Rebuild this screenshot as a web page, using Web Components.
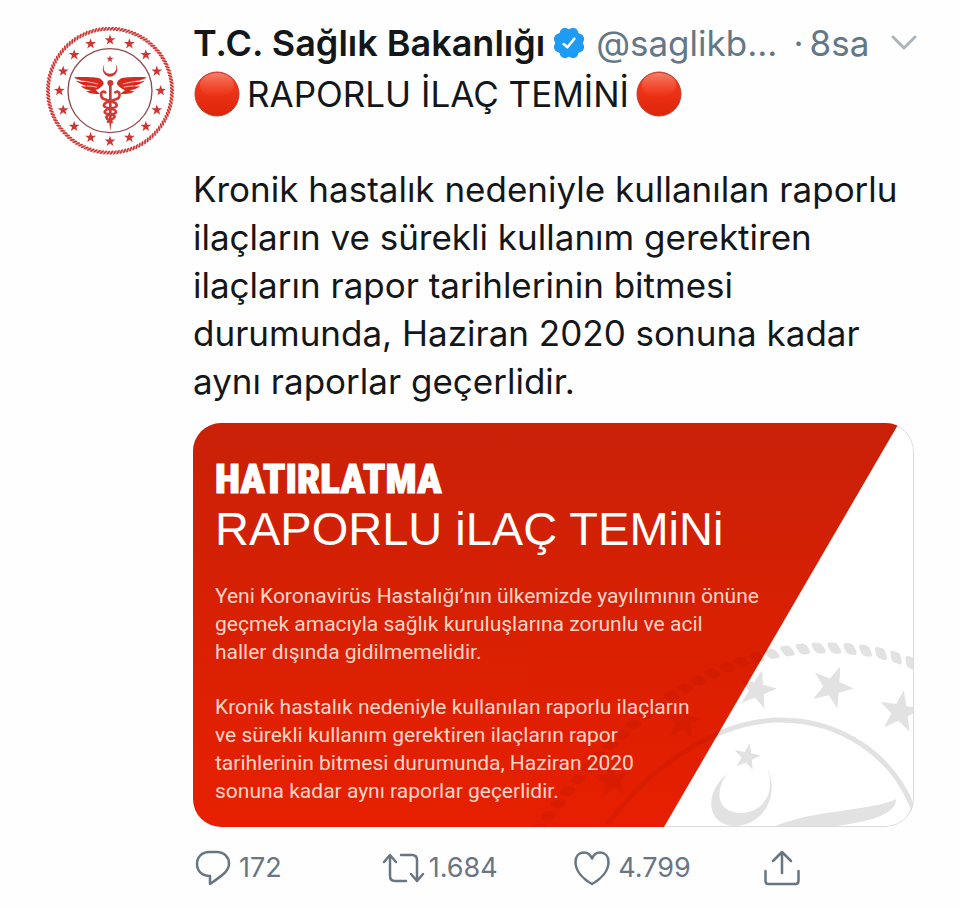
<!DOCTYPE html>
<html lang="tr">
<head>
<meta charset="utf-8">
<meta name="viewport" content="width=device-width, initial-scale=1">
<title>T.C. Sağlık Bakanlığı</title>
<style>
  body { margin: 0; background: #fefefe; color: #14171a; font-family: Inter, "Liberation Sans", sans-serif; }
</style>
</head>
<body>
<tweet-post>
  <ministry-seal slot="avatar"></ministry-seal>
  <tweet-header slot="header" name="T.C. Sağlık Bakanlığı" handle="@saglikb..." time="8sa"></tweet-header>
  <tweet-body slot="body">
    <span slot="title"><red-dot></red-dot>RAPORLU İLAÇ TEMİNİ<red-dot></red-dot></span>
    Kronik hastalık nedeniyle kullanılan raporlu ilaçların ve sürekli kullanım gerektiren ilaçların rapor tarihlerinin bitmesi durumunda, Haziran 2020 sonuna kadar aynı raporlar geçerlidir.
  </tweet-body>
  <notice-card slot="media">
    <span slot="kicker">HATIRLATMA</span>
    <span slot="title">RAPORLU iLAÇ TEMiNi</span>
    <p>Yeni Koronavirüs Hastalığı’nın ülkemizde yayılımının önüne<br>geçmek amacıyla sağlık kuruluşlarına zorunlu ve acil<br>haller dışında gidilmemelidir.</p>
    <p>Kronik hastalık nedeniyle kullanılan raporlu ilaçların<br>ve sürekli kullanım gerektiren ilaçların rapor<br>tarihlerinin bitmesi durumunda, Haziran 2020<br>sonuna kadar aynı raporlar geçerlidir.</p>
  </notice-card>
  <tweet-action slot="actions" kind="reply" label="Yanıtla">172</tweet-action>
  <tweet-action slot="actions" kind="retweet" label="Retweetle">1.684</tweet-action>
  <tweet-action slot="actions" kind="like" label="Beğen">4.799</tweet-action>
  <tweet-action slot="actions" kind="share" label="Paylaş"></tweet-action>
</tweet-post>

<script>
  const SVG = 'http://www.w3.org/2000/svg';

  // Points of a five-pointed star around a centre.
  function star(cx, cy, r, turn = 0) {
    const pts = [];
    for (let i = 0; i < 10; i++) {
      const a = (turn - 90 + i * 36) * Math.PI / 180;
      const d = i % 2 ? r * 0.4 : r;
      pts.push((cx + d * Math.cos(a)).toFixed(2) + ',' + (cy + d * Math.sin(a)).toFixed(2));
    }
    return `<polygon points="${pts.join(' ')}"/>`;
  }

  // Slanted strands laid along a path, forming a rope.
  function rope(d, count, w, h, slant) {
    const p = document.createElementNS(SVG, 'path');
    p.setAttribute('d', d);
    const len = p.getTotalLength();
    let out = '';
    for (let i = 0; i < count; i++) {
      const s = (i + 0.5) * len / count;
      const a = p.getPointAtLength(s), b = p.getPointAtLength(Math.min(len, s + 1)), c = p.getPointAtLength(Math.max(0, s - 1));
      const deg = Math.atan2(b.y - c.y, b.x - c.x) * 180 / Math.PI;
      out += `<rect x="${-w / 2}" y="${-h / 2}" width="${w}" height="${h}" rx="${w / 3}" transform="translate(${a.x.toFixed(2)} ${a.y.toFixed(2)}) rotate(${deg.toFixed(2)}) skewX(${slant})"/>`;
    }
    return out;
  }

  class BaseElement extends HTMLElement {
    constructor() {
      super();
      this.attachShadow({ mode: 'open' });
    }
    connectedCallback() {
      this.shadowRoot.innerHTML = this.render();
    }
  }

  customElements.define('tweet-post', class extends BaseElement {
    render() {
      return `<style>
        :host { display: block; padding: 19px 46px 16px; }
        article { display: grid; grid-template-columns: 128px minmax(0, 1fr); column-gap: 19px; }
        .avatar { padding-top: 8px; }
        footer { display: grid; grid-template-columns: repeat(3, 1fr) 152px; margin-top: 17px; }
      </style>
      <article>
        <div class="avatar"><slot name="avatar"></slot></div>
        <div>
          <slot name="header"></slot>
          <slot name="body"></slot>
          <slot name="media"></slot>
          <footer><slot name="actions"></slot></footer>
        </div>
      </article>`;
    }
  });

  customElements.define('ministry-seal', class extends BaseElement {
    render() {
      let stars = '';
      for (let i = 0; i < 16; i++) {
        const a = i * 22.5 * Math.PI / 180;
        stars += star(210 + 152 * Math.sin(a), 211 - 152 * Math.cos(a), 17);
      }
      const wing = `<path d="M102 171C120 169 168 170 178 174C188 179 193 187 190 193C183 200 176 207 167 209C173 214 177 218 180 220C165 222 146 220 138 211C142 212 149 212 153 210C139 208 127 203 122 197C129 199 137 199 142 197C125 193 112 186 108 181C121 184 132 186 142 185C124 181 107 177 102 171Z"/>
        <path d="M128 182C145 184 161 188 174 191M141 197C153 197 163 199 171 201" fill="none" stroke="#fff" stroke-width="2"/>`;
      return `<style>:host { display: block; } svg { display: block; width: 100%; }</style>
      <svg viewBox="18 20 384 384" role="img" aria-label="T.C. Sağlık Bakanlığı">
        <circle cx="210" cy="211" r="190" fill="#fff"/>
        <g fill="#cf3633">
          <circle cx="210" cy="211" r="186" fill="none" stroke="#e9a3a0" stroke-width="7"/>
          ${rope('M210 25A186 186 0 1 1 209.9 25Z', 120, 6, 12, -35)}
          <circle cx="210" cy="211" r="126" fill="none" stroke="#8f4a4c" stroke-width="4"/>
          ${stars}
          ${star(210, 116, 11)}
          <path d="M194 131C183 143 188 168 210 169C232 168 238 143 226 131C234 147 225 160 210 160C195 160 186 147 194 131Z"/>
          <g fill="#d8291f">${wing}<g transform="translate(422 0) scale(-1 1)">${wing}</g></g>
          <circle cx="211" cy="188" r="9"/>
          <path d="M207 190H215V300L211 332L207 300Z"/>
          <g fill="none" stroke="#d33a36" stroke-width="8" stroke-linecap="round">
            <path d="M196 216C181 207 178 232 194 237C212 243 233 246 230 257C225 267 194 262 194 275C194 285 225 279 224 290C222 297 208 298 204 304"/>
            <path d="M226 216C241 207 244 232 228 237C210 243 189 246 192 257C197 267 228 262 228 275C228 285 198 280 199 291C201 299 214 300 215 305"/>
          </g>
        </g>
      </svg>`;
    }
  });

  customElements.define('tweet-header', class extends BaseElement {
    render() {
      let lobes = '';
      for (let i = 0; i < 8; i++) {
        const a = (i * 45 + 22.5) * Math.PI / 180;
        lobes += `<circle cx="${(16 + 10 * Math.cos(a)).toFixed(2)}" cy="${(16 + 10 * Math.sin(a)).toFixed(2)}" r="5"/>`;
      }
      return `<style>
        :host { display: flex; align-items: center; height: 48px; margin-bottom: 3px; font-size: 35px; line-height: 48px; white-space: nowrap; color: #647786; }
        h1 { margin: 0; font: inherit; font-size: 36px; font-weight: 600; color: #14171a; }
        .badge { flex: none; width: 34px; height: 34px; margin: 0 10px 0 7px; }
        a { color: inherit; text-decoration: none; }
        .dot { margin-left: 16px; margin-right: 6px; }
        button { margin: 0 -4px 0 auto; padding: 0; border: 0; background: none; display: flex; }
      </style>
      <h1>${this.getAttribute('name')}</h1>
      <svg class="badge" viewBox="0 0 32 32" role="img" aria-label="Onaylanmış hesap">
        <g fill="#1d9bf5">${lobes}<circle cx="16" cy="16" r="13"/></g>
        <path d="M11 17L14.500 20L21 12" fill="none" stroke="#fff" stroke-width="2.500" stroke-linecap="round" stroke-linejoin="round"/>
      </svg>
      <a href="#profile">${this.getAttribute('handle')}</a>
      <span class="dot">·</span><time>${this.getAttribute('time')}</time>
      <button type="button" aria-label="Diğer">
        <svg width="28" height="16" viewBox="0 0 28 16"><path d="M3 2L14 13L25 2" fill="none" stroke="#a9b4bd" stroke-width="3" stroke-linecap="round"/></svg>
      </button>`;
    }
  });

  customElements.define('red-dot', class extends BaseElement {
    render() {
      return `<style>:host { display: inline-block; width: 48px; height: 46px; } svg { display: block; margin: 0 auto; }</style>
      <svg width="46" height="46" viewBox="0 0 46 46" role="img" aria-label="Kırmızı daire">
        <defs>
          <linearGradient id="body" x1="0" y1="0" x2="0" y2="1"><stop offset="0" stop-color="#e2402c"/><stop offset=".4" stop-color="#ee3418"/><stop offset="1" stop-color="#dc2409"/></linearGradient>
          <linearGradient id="shine" x1="0" y1="0" x2="0" y2="1"><stop offset="0" stop-color="#ff9a80" stop-opacity=".7"/><stop offset="1" stop-color="#ff6a4c" stop-opacity="0"/></linearGradient>
        </defs>
        <circle cx="23" cy="23" r="22" fill="url(#body)" stroke="#c43a2c"/>
        <ellipse cx="23" cy="14" rx="17" ry="12" fill="url(#shine)"/>
      </svg>`;
    }
  });

  customElements.define('tweet-body', class extends BaseElement {
    render() {
      return `<style>
        :host { display: block; font-size: 35px; line-height: 48px; }
        p { margin: 0; }
        .title { height: 48px; margin-bottom: 47px; }
        ::slotted([slot="title"]) { display: flex; align-items: center; gap: 6px; }
      </style>
      <p class="title"><slot name="title"></slot></p>
      <p><slot></slot></p>`;
    }
  });

  customElements.define('notice-card', class extends BaseElement {
    render() {
      const ring = 'M608 824C650 765 720 720 780 720C840 720 895 755 915 814';
      const emblem = `
        ${rope('M535 835C600 740 700 648 826 648C860 648 890 653 918 666', 29, 11, 11, 28)}
        ${star(757, 690, 20, 14)}${star(832, 687, 22, 22)}${star(900, 712, 22, 10)}${star(683, 722, 19, 6)}${star(612, 780, 19, -6)}
        ${star(747, 757, 14, 12)}
        <path d="${ring}" fill="none" stroke="currentColor" stroke-width="5"/>
        <path d="M727 774C702 795 708 826 736 826C765 824 780 794 767 768C776 790 765 812 742 813C717 813 714 792 727 774Z"/>
        <path d="M773 827C800 815 830 813 860 808C880 805 890 802 896 799C896 811 880 818 860 822C840 826 830 827 825 827Z"/>`;
      return `<style>
        :host { display: grid; margin-top: 18px; border-radius: 28px; overflow: hidden; background: #fff; }
        svg, .text { grid-area: 1 / 1; }
        svg { width: 100%; height: 100%; min-height: 0; contain: size; }
        .text { position: relative; padding: 31px 22px 22px; color: #fff; }
        h2, h3 { margin: 0; white-space: nowrap; }
        h2 { font: 900 41px/50px "Roboto Condensed", Roboto, sans-serif; -webkit-text-stroke: 1px #fff; }
        h3 { font: 400 47px/50px "Liberation Sans", sans-serif; }
        .copy { margin-top: 28px; font: 400 21px/28px Roboto, sans-serif; color: #ffd5c8; }
        ::slotted(p) { margin: 0 0 27px; }
        ::slotted(p:last-child) { margin: 0; }
      </style>
      <svg viewBox="193 423 721 404" preserveAspectRatio="xMaxYMax slice" aria-hidden="true">
        <defs>
          <linearGradient id="red" x1="0" y1="0" x2="0" y2="1"><stop offset="0" stop-color="#c92108"/><stop offset=".5" stop-color="#d92003"/><stop offset="1" stop-color="#e72000"/></linearGradient>
          <clipPath id="panel"><path d="M193 423H899L664 827H193Z"/></clipPath>
        </defs>
        <g fill="#e2e2e2" color="#e2e2e2">${emblem}</g>
        <rect x="193.500" y="423.500" width="720" height="403" rx="28" fill="none" stroke="#d9dcde"/>
        <path d="M0 423H899L664 827H0Z" fill="url(#red)"/>
        <g clip-path="url(#panel)" opacity=".16"><g fill="#a01000" color="#a01000">${emblem}</g></g>
      </svg>
      <div class="text">
        <h2><slot name="kicker"></slot></h2>
        <h3><slot name="title"></slot></h3>
        <div class="copy"><slot></slot></div>
      </div>`;
    }
  });

  const ICONS = {
    reply: [36, '<path d="M14 2H22C29 2 34 7 34 13.500C34 21 28 25 15 34V26C7 26 2 21 2 14C2 7 7 2 14 2Z"/>'],
    retweet: [42, '<path d="M2 12L8 5L14 12M8 6V26Q8 31 13 31H24M19 5H30Q35 5 35 10V30M29 24L35 31L41 24"/>'],
    like: [36, '<path d="M18 34C9 29 1.500 21 1.500 12C1.500 6 5 2.500 10 2.500C14 2.500 16.500 5 18 8.500C19.500 5 22 2.500 26 2.500C31 2.500 34.500 6 34.500 12C34.500 21 27 29 18 34Z"/>'],
    share: [36, '<path d="M1.500 21V31Q1.500 34 4.500 34H31.500Q34.500 34 34.500 31V21M18 23V2M9 11L18 2L27 11"/>']
  };

  customElements.define('tweet-action', class extends BaseElement {
    render() {
      const [w, shape] = ICONS[this.getAttribute('kind')];
      const wide = w > 36;
      return `<style>
        :host { display: block; }
        button { display: flex; align-items: center; gap: ${wide ? 5 : 8}px; height: 48px; margin-left: ${wide ? -1 : 2}px; padding: 0; border: 0; background: none; color: #687684; font: 400 27px/48px Inter, "Liberation Sans", sans-serif; }
        svg { flex: none; overflow: visible; }
      </style>
      <button type="button" aria-label="${this.getAttribute('label')} ${this.textContent}">
        <svg width="${w}" height="36" viewBox="0 0 ${w} 36" fill="none" stroke="currentColor" stroke-width="2.500" stroke-linecap="round" stroke-linejoin="round">${shape}</svg>
        <slot></slot>
      </button>`;
    }
  });
</script>
</body>
</html>
